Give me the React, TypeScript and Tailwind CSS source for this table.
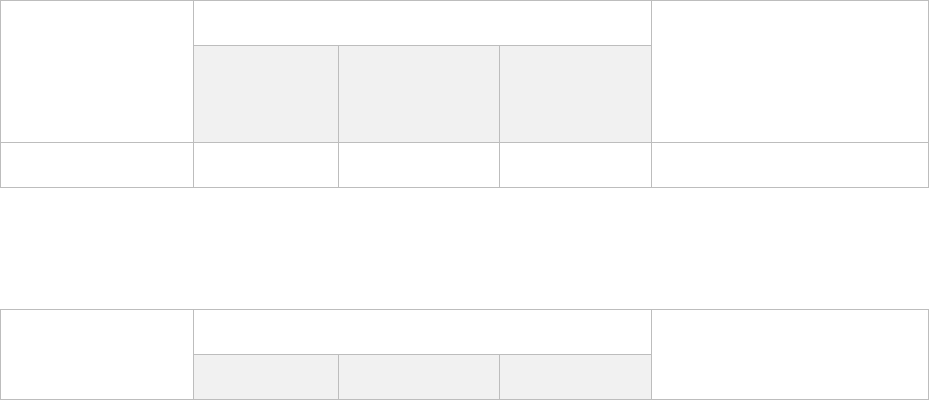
const cell = "border border-[#bdbdbd] p-0"
const sub = "border border-[#bdbdbd] bg-[#f1f1f1] p-0"

function Cols() {
  return (
    <colgroup>
      <col className="w-[193px]" />
      <col className="w-[145px]" />
      <col className="w-[161px]" />
      <col className="w-[152px]" />
      <col className="w-[277px]" />
    </colgroup>
  )
}

export default function App() {
  return (
    <div className="w-[929px] bg-white font-['Liberation_Sans',sans-serif]">
      <table className="w-[928px] table-fixed border-collapse">
        <Cols />
        <thead>
          <tr className="h-[45px]">
            <th rowSpan={2} className={cell}></th>
            <th colSpan={3} className={cell}></th>
            <th rowSpan={2} className={cell}></th>
          </tr>
          <tr className="h-[97px]">
            <th className={sub}></th>
            <th className={sub}></th>
            <th className={sub}></th>
          </tr>
        </thead>
        <tbody>
          <tr className="h-[45px]">
            <td className={cell}></td>
            <td className={cell}></td>
            <td className={cell}></td>
            <td className={cell}></td>
            <td className={cell}></td>
          </tr>
        </tbody>
      </table>

      <table className="mt-[121px] w-[928px] table-fixed border-collapse">
        <Cols />
        <thead>
          <tr className="h-[45px]">
            <th rowSpan={2} className={cell}></th>
            <th colSpan={3} className={cell}></th>
            <th rowSpan={2} className={cell}></th>
          </tr>
          <tr className="h-[45px]">
            <th className={sub}></th>
            <th className={sub}></th>
            <th className={sub}></th>
          </tr>
        </thead>
        <tbody>
          <tr className="h-[45px]">
            <td className={cell}></td>
            <td className={cell}></td>
            <td className={cell}></td>
            <td className={cell}></td>
            <td className={cell}></td>
          </tr>
        </tbody>
      </table>
    </div>
  )
}
